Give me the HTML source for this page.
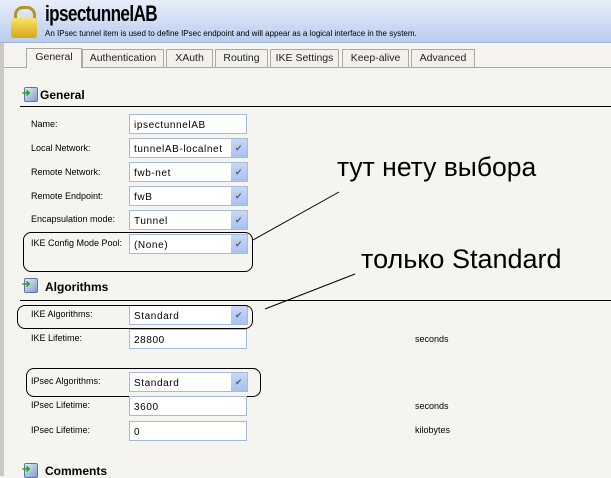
<html><head><style>
body{margin:0;width:611px;height:476px;overflow:hidden;background:#f5f4ef;font-family:"Liberation Sans",sans-serif;position:relative}
.a{position:absolute}
.hdr{left:0;top:0;width:611px;height:42px;background:linear-gradient(#e8eefa,#b9cdee);border-bottom:1px solid #9fb3d8}
.lbl{position:absolute;font-size:9px;color:#000;left:31px;font-family:"Liberation Sans",sans-serif}
.in{position:absolute;left:129px;width:118px;height:20px;border:1px solid #a5b9d8;background:#fff;font-family:"Liberation Sans",sans-serif;font-size:10px;letter-spacing:.6px;line-height:21px;padding-left:4px;box-sizing:border-box;white-space:nowrap;overflow:hidden}
.sel{width:119px}
.sel:after{content:"";position:absolute;right:0;top:0;width:16px;height:18px;background:linear-gradient(#c8d8f6,#a9c1ee)}
.sel i{position:absolute;right:4px;top:0;z-index:2;font-style:normal;color:#4d6185;font-size:9px;font-family:"DejaVu Sans";}
.tab{position:absolute;top:49px;height:17px;background:#f1f0e9;border:1px solid #a9a9a2;border-bottom:none;font-size:10.5px;text-align:center;line-height:17px;font-family:"Liberation Sans",sans-serif;color:#222}
.h{position:absolute;font-weight:bold;font-size:12px;font-family:"Liberation Sans",sans-serif}
.ic{position:absolute;width:12px;height:13px;background:linear-gradient(135deg,#e6eef8,#7e9cc4);border:1px solid #5b78a3;border-radius:2px}
.ic b{position:absolute;left:-3px;top:0;color:#2a9a2a;font-size:10px}
.ln{position:absolute;left:20px;right:0;height:1px;background:#000}
.r{position:absolute;font-size:9px;left:415px}
.box{position:absolute;border:1px solid #000;border-radius:8px}
</style></head><body>
<div class="a hdr"></div>
<div class="a" style="left:14px;top:6px;width:16px;height:14px;border:3px solid #b79320;border-bottom:none;border-radius:9px 9px 0 0"></div>
<div class="a" style="left:11px;top:18px;width:26px;height:20px;background:linear-gradient(#fbe46a,#d7a614);border-radius:3px"></div>
<div class="a" style="left:45px;top:1px;font-size:22px;font-weight:bold;font-family:'Liberation Sans',sans-serif;letter-spacing:-0.8px;transform:scaleX(.78);transform-origin:left">ipsectunnelAB</div>
<div class="a" style="left:45px;top:29px;font-size:8px">An IPsec tunnel item is used to define IPsec endpoint and will appear as a logical interface in the system.</div>
<div class="a" style="left:0;top:43px;width:4px;height:433px;background:#c9c8c2"></div>
<div class="a" style="left:4px;top:67px;width:607px;height:1px;background:#a9a9a2"></div>
<div class="tab" style="left:26px;width:54px;top:48px;height:19px;background:#f5f4ef;border-color:#a9a9a2">General</div>
<div class="tab" style="left:82px;width:80px">Authentication</div>
<div class="tab" style="left:166px;width:45px">XAuth</div>
<div class="tab" style="left:215px;width:51px">Routing</div>
<div class="tab" style="left:270px;width:67px">IKE Settings</div>
<div class="tab" style="left:342px;width:65px">Keep-alive</div>
<div class="tab" style="left:411px;width:62px">Advanced</div>
<div class="ic" style="left:24px;top:87px"><b>➔</b></div><div class="h" style="left:40px;top:88px">General</div>
<div class="ln" style="top:106px"></div>
<div class="lbl" style="top:119px">Name:</div><div class="in" style="top:114px">ipsectunnelAB</div>
<div class="lbl" style="top:143px">Local Network:</div><div class="in sel" style="top:138px">tunnelAB-localnet<i>✔</i></div>
<div class="lbl" style="top:167px">Remote Network:</div><div class="in sel" style="top:162px">fwb-net<i>✔</i></div>
<div class="lbl" style="top:191px">Remote Endpoint:</div><div class="in sel" style="top:186px">fwB<i>✔</i></div>
<div class="lbl" style="top:214px">Encapsulation mode:</div><div class="in sel" style="top:210px">Tunnel<i>✔</i></div>
<div class="lbl" style="top:238px">IKE Config Mode Pool:</div><div class="in sel" style="top:234px">(None)<i>✔</i></div>
<div class="box" style="left:23px;top:232px;width:228px;height:38px"></div>
<div class="ic" style="left:24px;top:278px"><b>➔</b></div><div class="h" style="left:45px;top:280px">Algorithms</div>
<div class="ln" style="top:300px"></div>
<div class="lbl" style="top:309px">IKE Algorithms:</div><div class="in sel" style="top:305px">Standard<i>✔</i></div>
<div class="box" style="left:17px;top:305px;width:234px;height:22px"></div>
<div class="lbl" style="top:333px">IKE Lifetime:</div><div class="in" style="top:329px">28800</div><div class="r" style="top:334px">seconds</div>
<div class="lbl" style="top:376px">IPsec Algorithms:</div><div class="in sel" style="top:372px">Standard<i>✔</i></div>
<div class="box" style="left:26px;top:368px;width:233px;height:27px"></div>
<div class="lbl" style="top:400px">IPsec Lifetime:</div><div class="in" style="top:396px">3600</div><div class="r" style="top:401px">seconds</div>
<div class="lbl" style="top:425px">IPsec Lifetime:</div><div class="in" style="top:421px">0</div><div class="r" style="top:425px">kilobytes</div>
<div class="ic" style="left:24px;top:463px"><b>➔</b></div><div class="h" style="left:45px;top:464px">Comments</div>
<svg class="a" style="left:0;top:0" width="611" height="476"><line x1="253" y1="240" x2="339" y2="192" stroke="#000" stroke-width="1"/><line x1="265" y1="309" x2="355" y2="274" stroke="#000" stroke-width="1"/></svg>
<div class="a" style="left:337px;top:152px;font-size:26.5px;font-family:'Liberation Sans',sans-serif">тут нету выбора</div>
<div class="a" style="left:361px;top:244px;font-size:27px;font-family:'Liberation Sans',sans-serif">только Standard</div>
</body></html>
